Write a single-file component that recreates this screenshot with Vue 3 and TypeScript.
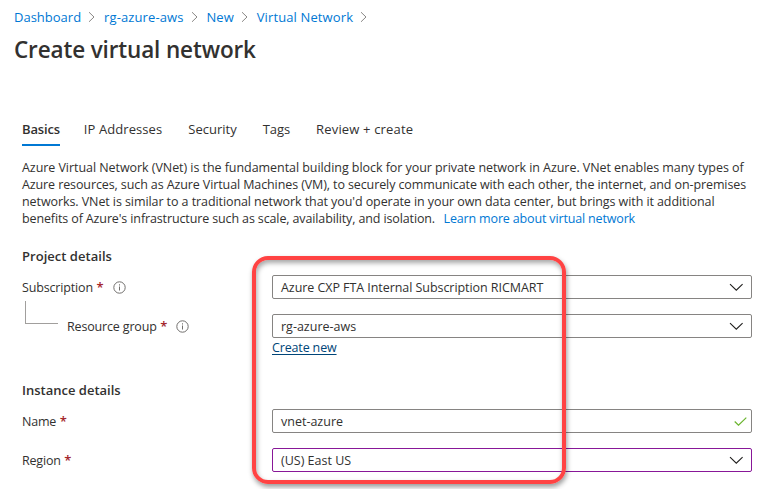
<script setup lang="ts">
interface Item { label: string; cls: string }
const crumbs: Item[] = [
  { label: 'Dashboard', cls: 'c1' },
  { label: 'rg-azure-aws', cls: 'c2' },
  { label: 'New', cls: 'c3' },
  { label: 'Virtual Network', cls: 'c4' },
]
const tabs: Item[] = [
  { label: 'Basics', cls: 't1 active' },
  { label: 'IP Addresses', cls: 't2' },
  { label: 'Security', cls: 't3' },
  { label: 'Tags', cls: 't4' },
  { label: 'Review + create', cls: 't5' },
]
</script>

<template>
  <main class="page">
    <nav class="crumbs">
      <span v-for="c in crumbs" :key="c.label" class="crumb">
        <a :class="c.cls">{{ c.label }}</a>
        <svg width="8" height="12" viewBox="0 0 8 12"><path d="M1 1.2 6 6 1 10.8" fill="none" stroke="#8a8886" stroke-width="1" /></svg>
      </span>
    </nav>
    <h1>Create virtual network</h1>
    <div class="tabs">
      <span v-for="t in tabs" :key="t.label" class="tab" :class="t.cls">{{ t.label }}</span>
    </div>
    <p class="intro">
      <span class="line l1">Azure Virtual Network (VNet) is the fundamental building block for your private network in Azure. VNet enables many types of</span>
      <span class="line l2">Azure resources, such as Azure Virtual Machines (VM), to securely communicate with each other, the internet, and on-premises</span>
      <span class="line l3">networks. VNet is similar to a traditional network that you'd operate in your own data center, but brings with it additional</span>
      <span class="line l4"><span class="end">benefits of Azure's infrastructure such as scale, availability, and isolation.</span><a class="learn">Learn more about virtual network</a></span>
    </p>

    <section class="project">
      <h2 class="h-project">Project details</h2>
      <div class="row">
        <label class="label"><span class="n-sub">Subscription</span><i>*</i>
          <svg class="info" width="13" height="13" viewBox="0 0 13 13"><circle cx="6.5" cy="6.5" r="5.7" fill="none" stroke="#706e6c" /><path d="M6.5 5.5v4M6.5 3.3v1.2" stroke="#706e6c" /></svg>
        </label>
        <div class="field"><span class="v-sub">Azure CXP FTA Internal Subscription RICMART</span>
          <svg class="chev" width="14" height="8" viewBox="0 0 14 8"><path d="M1 1.2 7.3 7.2 13.6 1.2" fill="none" stroke="#201f1e" stroke-width="1.1" /></svg>
        </div>
      </div>
      <div class="row child">
        <label class="label"><span class="branch"></span><span class="n-rg">Resource group</span><i>*</i>
          <svg class="info" width="13" height="13" viewBox="0 0 13 13"><circle cx="6.5" cy="6.5" r="5.7" fill="none" stroke="#706e6c" /><path d="M6.5 5.5v4M6.5 3.3v1.2" stroke="#706e6c" /></svg>
        </label>
        <div class="field"><span class="v-rg">rg-azure-aws</span>
          <svg class="chev" width="14" height="8" viewBox="0 0 14 8"><path d="M1 1.2 7.3 7.2 13.6 1.2" fill="none" stroke="#201f1e" stroke-width="1.1" /></svg>
        </div>
      </div>
      <a class="create">Create new</a>
    </section>

    <section class="instance">
      <h2 class="h-instance">Instance details</h2>
      <div class="row">
        <label class="label"><span class="n-name">Name</span><i>*</i></label>
        <div class="field"><span class="v-name">vnet-azure</span>
          <svg class="check" width="13" height="9" viewBox="0 0 13 9"><path d="M.7 4.5 4.5 8.2 12.3 .6" fill="none" stroke="#6bb52f" stroke-width="1.2" /></svg>
        </div>
      </div>
      <div class="row">
        <label class="label"><span class="n-region">Region</span><i>*</i></label>
        <div class="field edited"><span class="v-region">(US) East US</span>
          <svg class="chev" width="14" height="8" viewBox="0 0 14 8"><path d="M1 1.2 7.3 7.2 13.6 1.2" fill="none" stroke="#201f1e" stroke-width="1.1" /></svg>
        </div>
      </div>
    </section>
    <div class="callout"></div>
  </main>
</template>

<style>
body { background: #fff; }
</style>
<style scoped>
.page { position: relative; box-sizing: border-box; width: 775px; height: 489px; overflow: hidden; padding-top: 7px; font: 12.5px/17px "Open Sans", "Noto Sans", sans-serif; color: #323130; white-space: nowrap; }
a { color: #0078d4; }
.crumbs { display: flex; height: 20px; padding-left: 14px; font-size: 13px; line-height: 20px; }
.crumb { display: flex; align-items: center; }
.crumb svg { margin: 0 8px 0 7px; }
.c2 { letter-spacing: .11px; }
.c4 { letter-spacing: .12px; }
h1 { margin: 6px 0 0 14px; height: 34px; font-size: 22.5px; line-height: 34px; font-weight: 600; letter-spacing: -.14px; }
.tabs { display: flex; margin: 50px 0 0 22px; height: 29px; font-size: 13px; line-height: 24px; }
.tab { box-sizing: border-box; height: 29px; margin-right: 26px; }
.active { font-weight: 600; border-bottom: 2px solid #0078d4; letter-spacing: -.17px; margin-right: 24px; }
.t2 { letter-spacing: .08px; }
.t3 { letter-spacing: .02px; }
.t4 { letter-spacing: -.08px; }
.t5 { letter-spacing: .16px; }
.intro { margin: 13px 0 0 22px; }
.line { display: flex; height: 17px; }
.l1 { letter-spacing: -.056px; }
.l2 { letter-spacing: -.105px; }
.l3 { letter-spacing: -.082px; }
.l4 { letter-spacing: -.126px; }
.learn { letter-spacing: -.155px; }
.end { margin-right: 8.5px; }
h2 { margin: 0; font-size: 13px; line-height: 18px; font-weight: 600; }
.h-project { letter-spacing: .03px; }
.project { margin: 20px 0 0 22px; }
.instance { margin: 25px 0 0 22px; }
h2 + .row { margin-top: 10px; }
.row { display: flex; height: 24px; }
.row + .row { margin-top: 15px; }
.label { display: flex; align-items: center; width: 250px; }
.label i { margin-left: 3.5px; font-style: normal; font-weight: 600; color: #a4262c; font-size: 13px; }
.n-sub, .n-rg { letter-spacing: -.16px; }
.n-name, .n-region { letter-spacing: -.2px; }
.info { margin-left: 9px; margin-top: 1px; }
.branch { align-self: flex-start; width: 32px; height: 22px; margin: -13px 9px 0 3px; border: solid #a19f9d; border-width: 0 0 1px 1px; }
.field { box-sizing: border-box; width: 480px; height: 24px; display: flex; align-items: center; justify-content: space-between; padding: 0 8px; border: 1px solid #868482; border-radius: 2px; }
.v-sub { letter-spacing: -.06px; }
.edited { border-color: #881798; }
.check { margin-right: -4px; }
.create { display: block; width: max-content; margin: 1px 0 0 250px; height: 17px; color: #004578; text-decoration: underline; text-underline-offset: 2px; letter-spacing: -.15px; }
.callout { position: absolute; box-sizing: border-box; left: 252px; top: 256px; width: 314px; height: 228px; border: 4px solid #ff4343; border-radius: 16px; box-shadow: 1px 3px 5px rgba(0,0,0,.4), inset 1px 3px 5px rgba(0,0,0,.35); }
</style>
